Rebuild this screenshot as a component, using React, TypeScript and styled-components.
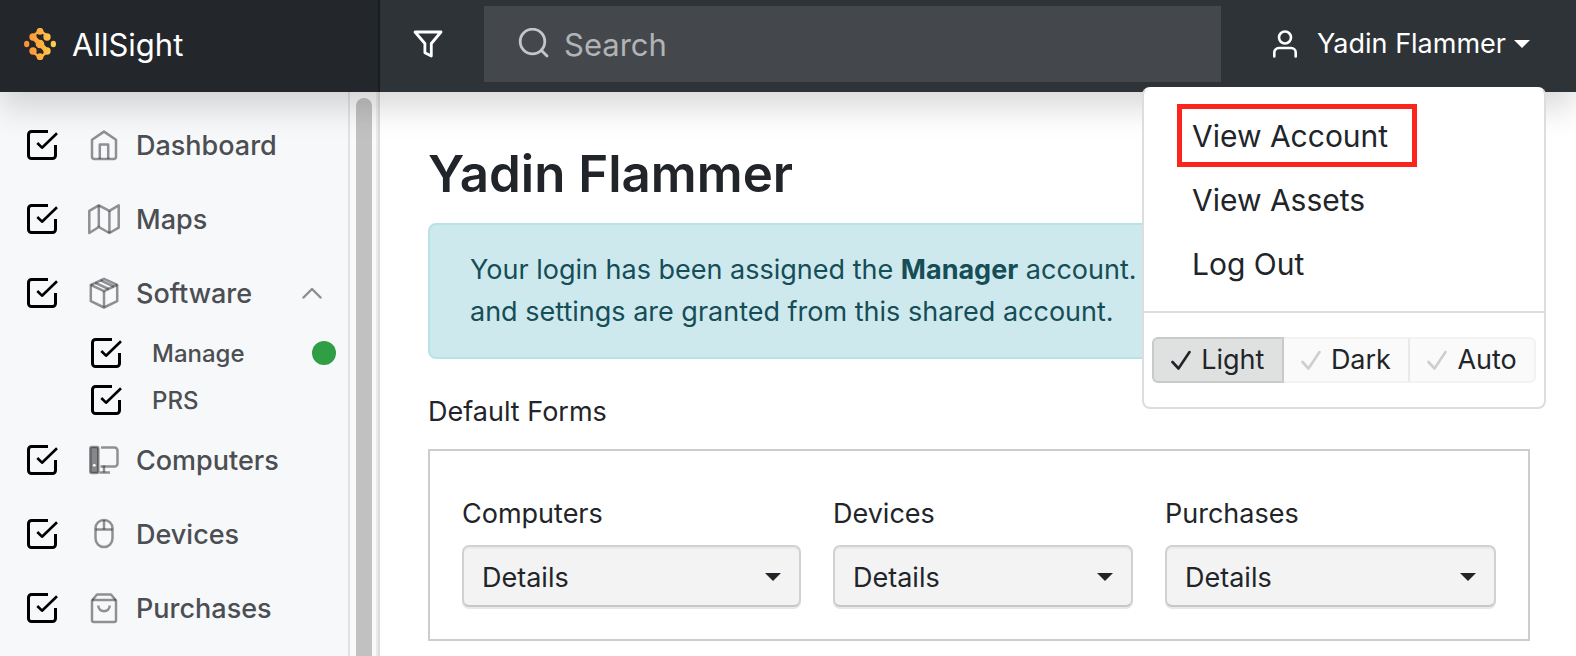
import React from "react";
import styled, { createGlobalStyle, css } from "styled-components";

const GlobalStyle = createGlobalStyle`
  *, *::before, *::after { box-sizing: border-box; }
  body {
    margin: 0;
    background: #fff;
    color: #212529;
    font-family: Inter, "Liberation Sans", sans-serif;
    font-size: 27px;
    line-height: 42px;
  }
  button, input, select { font: inherit; color: inherit; }
  h1, p, ul { margin: 0; padding: 0; }
  ul { list-style: none; }
  svg { display: block; flex: none; }
`;

const Page = styled.div`
  display: flex;
  flex-direction: column;
  height: 100vh;
  overflow: hidden;
`;

const Header = styled.header`
  position: relative;
  z-index: 2;
  display: flex;
  height: 92px;
  flex: none;
  background: #2e3338;
  box-shadow: 0 16px 32px rgba(0, 0, 0, 0.15);
`;

const Brand = styled.a`
  display: flex;
  align-items: center;
  gap: 16px;
  width: 380px;
  padding: 0 24px 4px;
  border-right: 2px solid #1a1d20;
  background: #23262b;
  color: #fff;
  font-size: 31px;
  text-decoration: none;
`;

const FilterButton = styled.button`
  display: flex;
  align-items: center;
  justify-content: center;
  width: 104px;
  padding: 0 8px 4px 0;
  border: 0;
  background: none;
  color: #fff;
`;

const SearchBox = styled.label`
  display: flex;
  flex: 1;
  align-items: center;
  gap: 14px;
  min-width: 0;
  margin: 6px 0 10px;
  padding: 0 34px;
  background: #44484c;
  color: #c4c6c8;
`;

const SearchInput = styled.input`
  flex: 1;
  min-width: 0;
  padding: 2px 0 0;
  border: 0;
  outline: 0;
  background: none;
  font-size: 31px;
  &::placeholder { color: #b1b3b5; opacity: 1; }
`;

const UserArea = styled.div`
  position: relative;
  display: flex;
  justify-content: flex-end;
  width: 355px;
  padding-right: 46px;
`;

const UserButton = styled.button`
  display: flex;
  align-items: center;
  padding: 0 0 4px;
  border: 0;
  background: none;
  color: #fff;
  white-space: nowrap;
`;

const UserName = styled.span`
  margin: 0 8px 0 19px;
`;

const Menu = styled.div`
  position: absolute;
  top: 87px;
  right: 30px;
  width: 404px;
  border: 2px solid #dcddde;
  border-top-color: #fff;
  border-radius: 8px;
  background: #fff;
`;

const MenuLinks = styled.div`
  padding: 15px 0;
`;

const MenuLink = styled.a<{ $outlined?: boolean }>`
  display: block;
  width: fit-content;
  height: 63px;
  margin: 0 0 1px 33px;
  padding: 6px 24px 5px 10px;
  border: 5px solid ${(p) => (p.$outlined ? "#fb251d" : "transparent")};
  font-size: 30px;
  color: #212529;
  text-decoration: none;
`;

const ThemeGroup = styled.div`
  display: flex;
  padding: 24px 8px;
  border-top: 2px solid #dcddde;
`;

const ThemeButton = styled.button<{ $active?: boolean }>`
  display: flex;
  flex: 1 1 auto;
  align-items: center;
  justify-content: center;
  gap: 10px;
  height: 46px;
  padding: 0;
  border: 2px solid #f2f2f2;
  border-left-width: 0;
  background: #fafafa;
  color: #212529;
  & > svg { opacity: 0.2; }
  &:not(:last-child) { border-right-color: #e9e9e9; }
  &:last-child { border-radius: 0 6px 6px 0; }
  ${(p) =>
    p.$active &&
    css`
      border: 2px solid #c8caca;
      border-radius: 6px 0 0 6px;
      background: #dfe1e0;
      &:not(:last-child) { border-right-color: #c8caca; }
      & > svg { opacity: 1; }
    `}
`;

const Body = styled.div`
  display: flex;
  flex: 1;
  min-height: 0;
`;

const Sidebar = styled.aside`
  display: flex;
  flex: none;
  width: 380px;
  border-right: 2px solid #dcdcdc;
  background: #f7f8fa;
`;

const Nav = styled.nav`
  flex: 1;
  padding-top: 16px;
`;

const ScrollTrack = styled.div`
  display: flex;
  width: 30px;
  padding: 6px 4px 0 6px;
  border-left: 2px solid #e2e2e2;
  border-right: 2px solid #ebebeb;
  background: #fafafa;
`;

const ScrollThumb = styled.div`
  flex: 1;
  border-radius: 8px 8px 0 0;
  background: #c1c1c1;
`;

const Row = styled.div`
  display: flex;
  align-items: center;
  height: 74px;
  padding: 0 26px;
`;

const SubList = styled.ul`
  display: grid;
  gap: 1px;
`;

const SubRow = styled.li`
  display: flex;
  align-items: center;
  height: 46px;
  padding: 0 12px 0 90px;
`;

const Check = styled.label`
  display: grid;
  & > * { grid-area: 1 / 1; }
`;

const CheckInput = styled.input`
  width: 32px;
  height: 32px;
  margin: 0;
  opacity: 0;
`;

const NavLink = styled.a`
  display: flex;
  flex: 1;
  align-items: center;
  gap: 16px;
  margin-left: 30px;
  color: #4b4e52;
  font-size: 27px;
  font-weight: 500;
  text-decoration: none;
`;

const NavLabel = styled.span`
  padding-top: 2px;
`;

const SubLink = styled(NavLink)`
  font-size: 24px;
`;

const Toggle = styled.button`
  padding: 0;
  border: 0;
  background: none;
  color: #8b8d90;
`;

const StatusDot = styled.span`
  width: 24px;
  height: 24px;
  border-radius: 50%;
  background: #2f9e44;
`;

const Main = styled.main`
  flex: 1;
  min-width: 0;
  padding: 48px 46px 0 48px;
`;

const Title = styled.h1`
  margin-bottom: 16px;
  font-size: 51px;
  font-weight: 600;
  line-height: 67px;
`;

const Alert = styled.div`
  margin-bottom: 32px;
  padding: 24px 40px;
  border: 2px solid #b8e2e8;
  border-radius: 8px;
  background: #cde9ed;
  color: #164d57;
  white-space: nowrap;
`;

const FormsCard = styled.div`
  display: grid;
  grid-template-columns: 339fr 300fr 331fr;
  gap: 32px;
  margin-top: 16px;
  padding: 42px 32px 32px;
  border: 2px solid #cccdce;
`;

const Field = styled.label`
  display: grid;
  gap: 10px;
`;

const SelectWrap = styled.span`
  display: grid;
  align-items: center;
  & > * { grid-area: 1 / 1; }
  & > svg { justify-self: end; margin: 2px 20px 0 0; pointer-events: none; }
`;

const Select = styled.select`
  appearance: none;
  width: 100%;
  height: 62px;
  padding: 4px 18px 0;
  border: 2px solid #d0d2d2;
  border-bottom-color: #c6c8c8;
  border-radius: 7px;
  background: #f3f3f3;
  box-shadow: inset 0 2px 0 #e9eaea, 0 2px 0 #e6e9e8;
`;

const Caret = () => (
  <svg width="16" height="8" viewBox="0 0 16 8" fill="currentColor" aria-hidden="true">
    <path d="M0 0h16L8 8z" />
  </svg>
);

const Tick = () => (
  <svg width="20" height="20" viewBox="0 0 20 20" fill="none" stroke="currentColor" strokeWidth="2.6" strokeLinecap="round" strokeLinejoin="round" aria-hidden="true">
    <path d="M1.500 12l6 6.500L18.500 2" />
  </svg>
);

const Logo = () => (
  <svg width="32" height="32" viewBox="0 0 96 96" aria-hidden="true">
    <defs>
      <linearGradient id="logo" gradientUnits="userSpaceOnUse" x1="0" y1="0" x2="96" y2="0">
        <stop offset="0" stopColor="#ff8a34" />
        <stop offset="1" stopColor="#ffd24a" />
      </linearGradient>
    </defs>
    <g fill="url(#logo)">
      <circle cx="48" cy="10" r="10.500" />
      <circle cx="27" cy="27" r="11" />
      <circle cx="69" cy="27" r="11" />
      <ellipse cx="8" cy="48" rx="8" ry="10" />
      <circle cx="48" cy="48" r="13" />
      <ellipse cx="88" cy="48" rx="8" ry="10" />
      <circle cx="27" cy="69" r="11" />
      <circle cx="69" cy="69" r="11" />
      <circle cx="48" cy="86" r="10.500" />
    </g>
    <g fill="none" stroke="url(#logo)">
      <path strokeWidth="7" d="M42 12Q34 18 30 22M54 12Q62 18 68 22M28 74Q36 78 42 85M68 74Q60 78 54 85" />
      <path strokeWidth="14" d="M27 27L69 69" />
    </g>
  </svg>
);

const FilterIcon = () => (
  <svg width="30" height="28" viewBox="0 0 30 28" fill="none" stroke="currentColor" strokeWidth="2.800" strokeLinejoin="round" aria-hidden="true">
    <path d="M2 2h26L18.300 13.500V26l-6.400-3.200v-9.300z" />
  </svg>
);

const SearchIcon = () => (
  <svg width="32" height="32" viewBox="0 0 32 32" fill="none" stroke="currentColor" strokeWidth="2.800" strokeLinecap="round" aria-hidden="true">
    <circle cx="14.500" cy="13.500" r="12.300" />
    <path d="M23.500 22.500l5.500 5.500" />
  </svg>
);

const UserIcon = () => (
  <svg width="26" height="28" viewBox="0 0 26 28" fill="none" stroke="currentColor" strokeWidth="2.600" strokeLinecap="round" aria-hidden="true">
    <circle cx="13" cy="7.500" r="6" />
    <path d="M2.300 26.500v-4a4.500 4.500 0 0 1 4.500-4.500h12.400a4.500 4.500 0 0 1 4.500 4.500v4" />
  </svg>
);

const CheckIcon = () => (
  <svg width="32" height="32" viewBox="0 0 32 32" fill="none" stroke="#000" strokeWidth="3" strokeLinejoin="round" aria-hidden="true">
    <path d="M22 2.500H5.500a3 3 0 0 0-3 3v21a3 3 0 0 0 3 3h21a3 3 0 0 0 3-3V16" />
    <path d="M11.300 14l4.700 4.700L31 4.300" strokeWidth="2.600" />
  </svg>
);

const ChevronUp = () => (
  <svg width="20" height="12" viewBox="0 0 20 12" fill="none" stroke="currentColor" strokeWidth="2.400" strokeLinecap="round" strokeLinejoin="round" aria-hidden="true">
    <path d="M1.500 10.500L10 2l8.500 8.500" />
  </svg>
);

type IconName = "home" | "map" | "box" | "computer" | "mouse" | "bag";

/* Translucent strokes darken where two of them cross. */
const iconPaths: Record<IconName, string[]> = {
  home: [
    "M6.500 30a2.500 2.500 0 0 1-2.500-2.500V10.800L16 2.600l12 8.200v16.700a2.500 2.500 0 0 1-2.500 2.500z",
    "M11.800 30V15.500h8.400V30",
  ],
  map: [
    "M1.300 7.800L10.800 2.300l10.600 5.500 9.300-5.500v22.400l-9.300 5.300-10.600-6-9.500 6z",
    "M10.800 2.300V24",
    "M21.400 7.800V30",
  ],
  box: [
    "M16 1.800l13.200 6v16.400L16 30.500 2.800 24.200V7.800z",
    "M2.800 7.800L16 14.200l13.200-6.400",
    "M16 14.200v16.300",
    "M7.300 5.800l13.400 6.200",
    "M12.500 3.400l13.300 6.100",
  ],
  computer: [
    "M13 3.500h13.500a3 3 0 0 1 3 3v13a3 3 0 0 1-3 3H12.500",
    "M16 21.500v7",
    "M11.500 28.500H22",
  ],
  mouse: [
    "M7.500 10.500a8.500 8.500 0 0 1 17 0v10a8.500 8.500 0 0 1-17 0z",
    "M7.500 11.500h17",
    "M16 2v9.500",
  ],
  bag: [
    "M4 8.500L9 2.500h14l5 6V28a2 2 0 0 1-2 2H6a2 2 0 0 1-2-2z",
    "M4 8h24",
    "M10.300 13.500c0 7.500 11.400 7.500 11.400 0",
  ],
};

const NavIcon = ({ name }: { name: IconName }) => (
  <svg width="32" height="32" viewBox="0 0 32 32" fill="none" stroke="#25282c" strokeOpacity="0.5" strokeWidth="2.500" strokeLinejoin="round" aria-hidden="true">
    {name === "computer" && (
      <>
        <rect x="2.300" y="3" width="8" height="26" rx="1.500" fill="#85888b" />
        <circle cx="6.300" cy="21.300" r="1.400" fill="#fff" stroke="none" />
      </>
    )}
    {iconPaths[name].map((d) => (
      <path key={d} d={d} />
    ))}
  </svg>
);

const CheckBox = ({ label }: { label: string }) => (
  <Check>
    <CheckIcon />
    <CheckInput type="checkbox" defaultChecked aria-label={`Show ${label}`} />
  </Check>
);

const NavRow = ({ icon, label, children }: { icon: IconName; label: string; children?: React.ReactNode }) => (
  <Row>
    <CheckBox label={label} />
    <NavLink href="#">
      <NavIcon name={icon} />
      <NavLabel>{label}</NavLabel>
    </NavLink>
    {children}
  </Row>
);

export default function App() {
  return (
    <Page>
      <GlobalStyle />
      <Header>
        <Brand href="#">
          <Logo />
          <NavLabel>AllSight</NavLabel>
        </Brand>
        <FilterButton aria-label="Filter">
          <FilterIcon />
        </FilterButton>
        <SearchBox>
          <SearchIcon />
          <SearchInput type="text" placeholder="Search" aria-label="Search" />
        </SearchBox>
        <UserArea>
          <UserButton aria-expanded="true">
            <UserIcon />
            <UserName>Yadin Flammer</UserName>
            <Caret />
          </UserButton>
          <Menu>
            <MenuLinks>
              <MenuLink href="#" $outlined>View Account</MenuLink>
              <MenuLink href="#">View Assets</MenuLink>
              <MenuLink href="#">Log Out</MenuLink>
            </MenuLinks>
            <ThemeGroup>
              <ThemeButton $active aria-pressed="true"><Tick />Light</ThemeButton>
              <ThemeButton aria-pressed="false"><Tick />Dark</ThemeButton>
              <ThemeButton aria-pressed="false"><Tick />Auto</ThemeButton>
            </ThemeGroup>
          </Menu>
        </UserArea>
      </Header>
      <Body>
        <Sidebar>
          <Nav>
            <NavRow icon="home" label="Dashboard" />
            <NavRow icon="map" label="Maps" />
            <NavRow icon="box" label="Software">
              <Toggle aria-label="Collapse Software"><ChevronUp /></Toggle>
            </NavRow>
            <SubList>
              <SubRow>
                <CheckBox label="Manage" />
                <SubLink href="#"><NavLabel>Manage</NavLabel></SubLink>
                <StatusDot />
              </SubRow>
              <SubRow>
                <CheckBox label="PRS" />
                <SubLink href="#"><NavLabel>PRS</NavLabel></SubLink>
              </SubRow>
            </SubList>
            <NavRow icon="computer" label="Computers" />
            <NavRow icon="mouse" label="Devices" />
            <NavRow icon="bag" label="Purchases" />
          </Nav>
          <ScrollTrack>
            <ScrollThumb />
          </ScrollTrack>
        </Sidebar>
        <Main>
          <Title>Yadin Flammer</Title>
          <Alert>
            Your login has been assigned the <strong>Manager</strong> account.
            <br />
            and settings are granted from this shared account.
          </Alert>
          <p>Default Forms</p>
          <FormsCard>
            {["Computers", "Devices", "Purchases"].map((name) => (
              <Field key={name}>
                {name}
                <SelectWrap>
                  <Select defaultValue="Details">
                    <option>Details</option>
                  </Select>
                  <Caret />
                </SelectWrap>
              </Field>
            ))}
          </FormsCard>
        </Main>
      </Body>
    </Page>
  );
}
